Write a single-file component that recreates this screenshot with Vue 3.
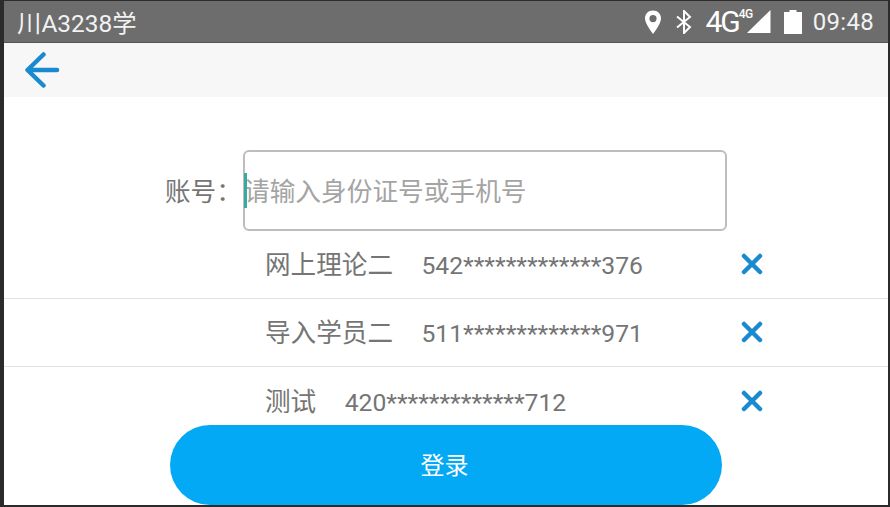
<script setup>
const rows = [
  { name: '网上理论二', id: '542*************376' },
  { name: '导入学员二', id: '511*************971' },
  { name: '测试', id: '420*************712' },
]
</script>

<template>
  <div class="frame">
    <div class="screen">
      <div class="status">
        <span class="plate">川A3238学</span>
        <div class="status-right">
          <svg class="i-pin" width="18" height="24" viewBox="0 0 18 24">
            <path fill-rule="evenodd" fill="#fff" d="M9 .5C4.300 .5 1 4 1 8.500C1 13.800 9 24 9 24C9 24 17 13.800 17 8.500C17 4 13.700 .5 9 .5ZM9 5A3.600 3.600 0 1 1 9 12.200A3.600 3.600 0 0 1 9 5Z"/>
          </svg>
          <svg class="i-bt" width="16" height="24" viewBox="0 0 16 24">
            <path fill="none" stroke="#fff" stroke-width="2" d="M1 6.500L14 17L8 23V1L14 7L1 17.500"/>
          </svg>
          <span class="net">4G</span>
          <span class="signal">
            <span class="net-small">4G</span>
            <svg width="24" height="24" viewBox="0 0 24 24"><path fill="#fff" d="M23.500 0V23H0Z"/></svg>
          </span>
          <svg class="i-bat" width="18" height="24" viewBox="0 0 18 24">
            <path fill="#fff" d="M5.500 0H12.500V2H18V24H0V2H5.500Z"/>
          </svg>
          <span class="time">09:48</span>
        </div>
      </div>

      <div class="topbar">
        <svg width="36" height="36" viewBox="0 0 36 36">
          <path fill="none" stroke="#1a8ad0" stroke-width="4.500" stroke-linecap="round" stroke-linejoin="round" d="M19.500 2.500L3.500 18L19.500 33.500M4 18H33"/>
        </svg>
      </div>

      <div class="content">
        <div class="account">
          <label class="label">账号：</label>
          <div class="input">
            <span class="caret"></span>
            <span class="placeholder">请输入身份证号或手机号</span>
          </div>
        </div>

        <ul class="list">
          <li v-for="row in rows" :key="row.id" class="row">
            <span class="who">
              <span class="name">{{ row.name }}</span>
              <span class="idno">{{ row.id }}</span>
            </span>
            <svg class="close" width="22" height="22" viewBox="0 0 22 22">
              <path fill="none" stroke="#1a8ad0" stroke-width="4.500" stroke-linecap="round" d="M3 3L19 19M19 3L3 19"/>
            </svg>
          </li>
        </ul>

        <button class="login" type="button">登录</button>
      </div>
    </div>
  </div>
</template>

<style>
html, body { margin: 0; padding: 0; background: #2b2b2b; }
</style>

<style scoped>
.frame {
  width: 890px;
  height: 507px;
  box-sizing: border-box;
  padding: 1px 2px 2px 4px;
  background: #2b2b2b;
  overflow: hidden;
  font-family: Roboto, "Noto Sans CJK SC", sans-serif;
}
.screen {
  height: 100%;
  display: flex;
  flex-direction: column;
  background: #fff;
}
.status {
  height: 42px;
  flex: none;
  display: flex;
  align-items: center;
  justify-content: space-between;
  box-sizing: border-box;
  padding: 0 14px 0 13px;
  background: #6d6d6d;
  border-bottom: 1px solid #555;
  color: #f2f2f2;
}
.plate { font-size: 24.400px; }
.status-right { display: flex; align-items: center; }
.i-pin { margin-right: 14px; }
.i-bt { margin-right: 13px; }
.net { font-size: 30px; letter-spacing: -2px; line-height: 30px; color: #fff; margin-right: 8px; }
.signal { position: relative; display: flex; margin-right: 13px; }
.net-small {
  position: absolute;
  left: -8px;
  top: -3px;
  font-size: 12px;
  letter-spacing: -0.5px;
  font-weight: 500;
  line-height: 14px;
  color: #fff;
}
.i-bat { margin-right: 11px; }
.time { font-size: 24px; letter-spacing: 0.3px; }

.topbar {
  height: 54px;
  flex: none;
  box-sizing: border-box;
  display: flex;
  align-items: center;
  padding: 0 0 0 20px;
  background: #f7f7f7;
}
.content {
  position: relative;
  flex: 1;
  padding-top: 53px;
  color: #757575;
  font-size: 25.600px;
}
.account {
  display: flex;
  align-items: center;
  padding-left: 161px;
}
.label { width: 78px; flex: none; position: relative; top: -1px; }
.input {
  width: 484px;
  height: 81px;
  box-sizing: border-box;
  display: flex;
  align-items: center;
  position: relative;
  border: 2px solid #bdbdbd;
  border-radius: 6px;
}
.caret {
  position: absolute;
  left: -1px;
  top: 21px;
  width: 3px;
  height: 35px;
  background: #3aa99f;
}
.placeholder { color: #a4a4a4; font-size: 25.700px; margin: -2px 0 0 -1px; }
.list { list-style: none; margin: 0; padding: 0; }
.row {
  height: 68px;
  box-sizing: border-box;
  display: flex;
  align-items: center;
  justify-content: space-between;
  padding: 0 125px 1px 261px;
  border-bottom: 1px solid #e2e2e2;
}
.row:last-child { border-bottom: 0; }
.who { display: flex; align-items: baseline; gap: 28.500px; white-space: nowrap; margin-top: -3px; }
.idno { font-size: 24.700px; }
.close { flex: none; }
.login {
  position: absolute;
  left: 166px;
  bottom: 0;
  width: 552px;
  height: 80px;
  padding: 0 3px 4px 0;
  border: 0;
  border-radius: 40px;
  background: #03a9f4;
  color: #fff;
  font: inherit;
  font-size: 24px;
}
</style>
